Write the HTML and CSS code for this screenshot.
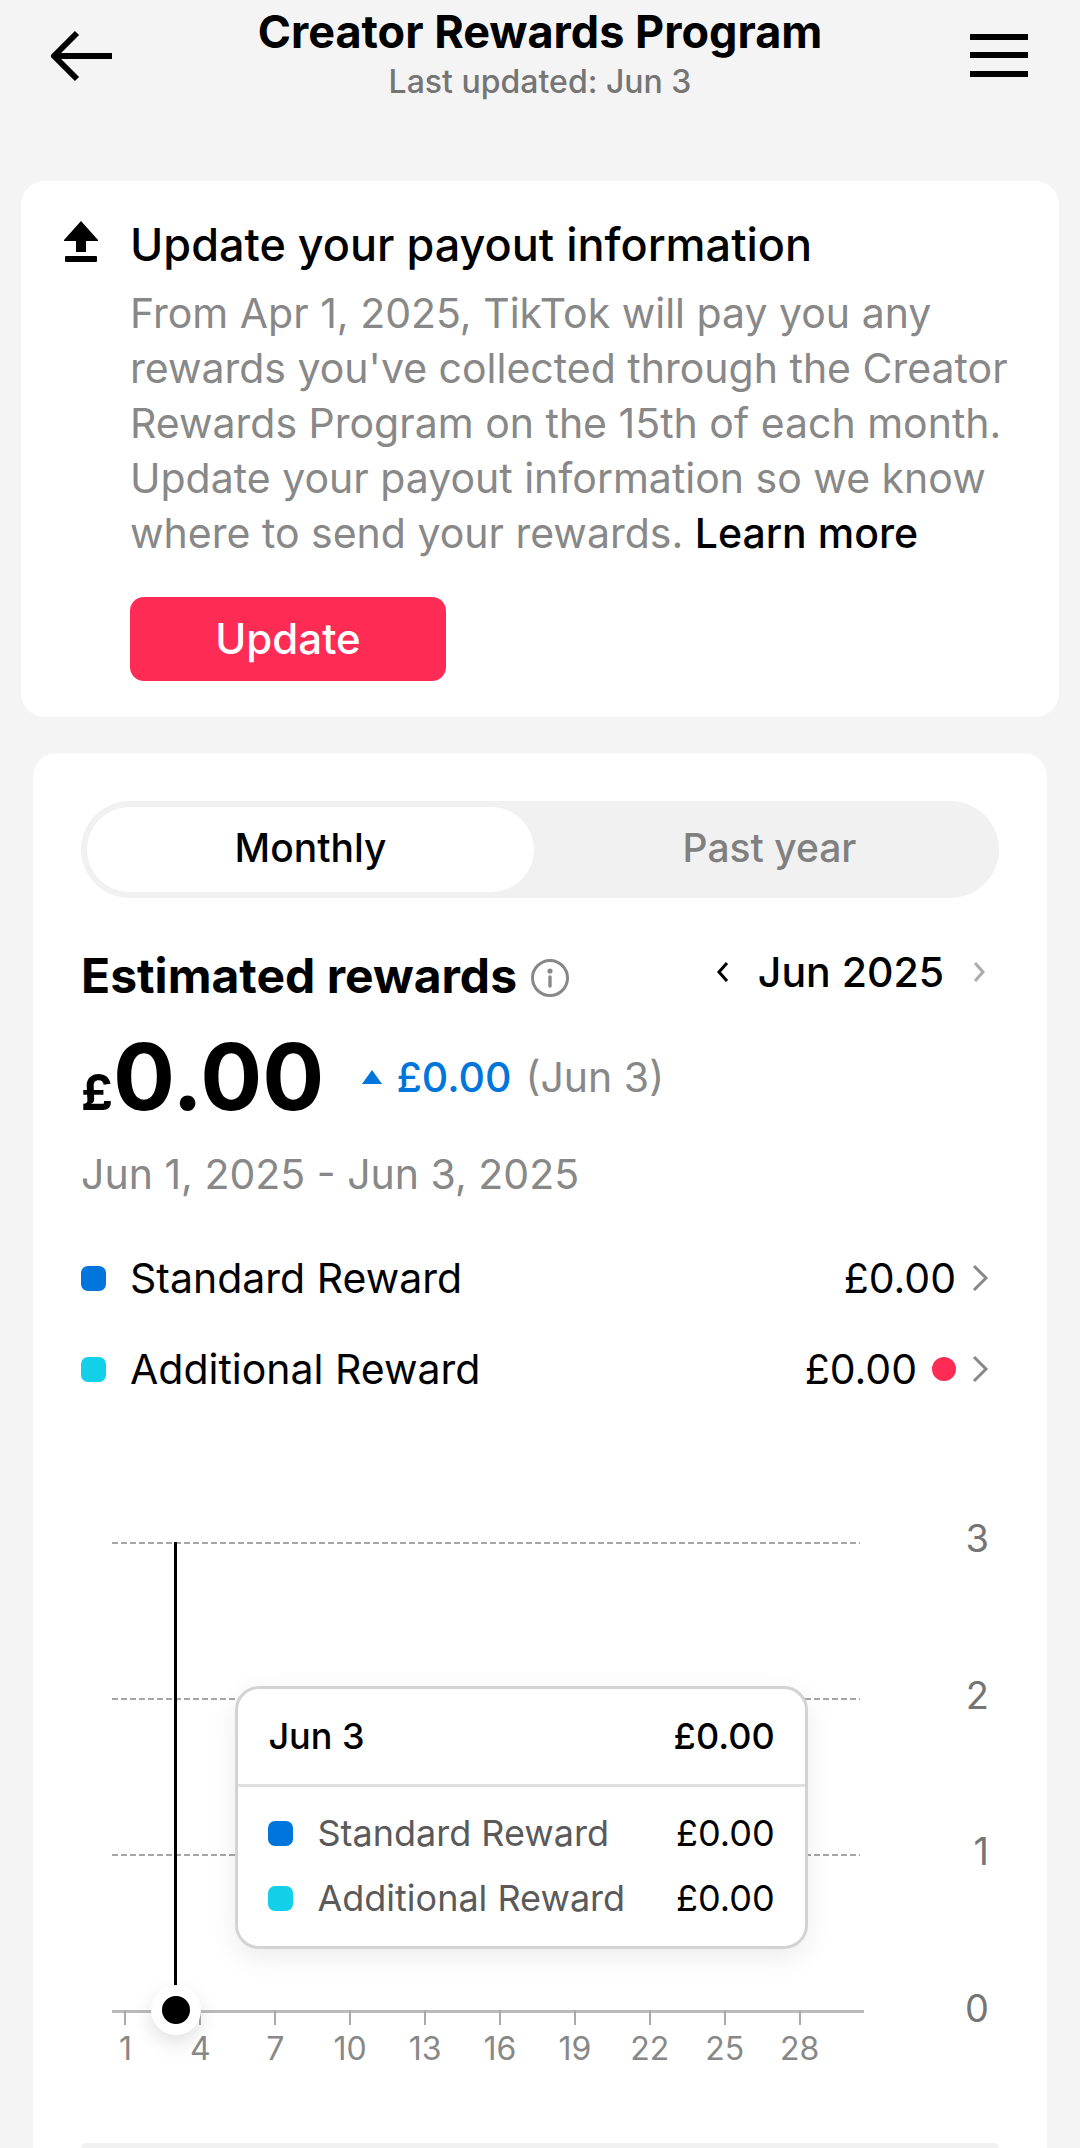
FILE: index.html
```html
<!DOCTYPE html>
<html lang="en">
<head>
    <meta charset="UTF-8">
    <meta name="viewport" content="width=device-width, initial-scale=1.0">
    <title>Creator Rewards Program</title>
    <link rel="stylesheet" href="styles.css">
</head>
<body>
    <header class="header">
        <button class="icon-btn" aria-label="Back">
            <svg width="64" height="64" viewBox="0 0 64 64" fill="none" stroke="#000" stroke-width="6" stroke-linejoin="round">
                <path d="M29 9L6 32L29 55M6 32H64"/>
            </svg>
        </button>
        <div class="header-titles">
            <h1>Creator Rewards Program</h1>
            <p>Last updated: Jun 3</p>
        </div>
        <button class="icon-btn" aria-label="Menu">
            <svg width="64" height="64" viewBox="0 0 64 64" fill="none" stroke="#000" stroke-width="6">
                <path d="M2 13H60M2 31H60M2 50H60"/>
            </svg>
        </button>
    </header>

    <!-- Payout notice -->
    <section class="notice">
        <svg class="notice-icon" width="34" height="42" viewBox="0 0 34 42">
            <path d="M17 0L34 19V20H22V31H12V20H0V19Z"/>
            <rect x="1" y="35" width="32" height="6" rx="1"/>
        </svg>
        <div class="notice-body">
            <h2>Update your payout information</h2>
            <p>From Apr 1, 2025, TikTok will pay you any rewards you've collected through the Creator Rewards Program on the 15th of each month. Update your payout information so we know where to send your rewards. <a href="#">Learn more</a></p>
            <button class="update-btn">Update</button>
        </div>
    </section>

    <!-- Rewards summary -->
    <main class="rewards">
        <div class="tabs" role="tablist">
            <button class="tab active" role="tab" aria-selected="true">Monthly</button>
            <button class="tab" role="tab" aria-selected="false">Past year</button>
        </div>

        <div class="rewards-head">
            <h2>Estimated rewards</h2>
            <button class="icon-btn info" aria-label="About estimated rewards">
                <svg width="38" height="38" viewBox="0 0 38 38">
                    <circle cx="19" cy="19" r="17.5" fill="none" stroke="#888" stroke-width="3"/>
                    <circle cx="19" cy="12" r="2.6" fill="#888"/>
                    <path d="M19 18V27" stroke="#888" stroke-width="3.4" stroke-linecap="round"/>
                </svg>
            </button>
            <div class="month">
                <button class="icon-btn" aria-label="Previous month">
                    <svg width="14" height="24" viewBox="0 0 14 24" fill="none" stroke="#000" stroke-width="3">
                        <path d="M11 3L3 12L11 21"/>
                    </svg>
                </button>
                <span>Jun 2025</span>
                <button class="icon-btn" aria-label="Next month">
                    <svg width="14" height="24" viewBox="0 0 14 24" fill="none" stroke="#aaa" stroke-width="3">
                        <path d="M3 3L11 12L3 21"/>
                    </svg>
                </button>
            </div>
        </div>

        <div class="total">
            <div class="amount"><span class="currency">£</span>0.00</div>
            <div class="change">
                <svg width="20" height="14" viewBox="0 0 20 14"><path d="M10 0L20 14H0Z" fill="#0075dc"/></svg>
                <strong>£0.00</strong>
                <span>(Jun 3)</span>
            </div>
        </div>
        <p class="range">Jun 1, 2025 - Jun 3, 2025</p>

        <div class="breakdown">
            <a class="row" href="#">
                <span class="swatch standard"></span>
                <span class="row-name">Standard Reward</span>
                <span>£0.00</span>
                <svg width="18" height="28" viewBox="0 0 18 28" fill="none" stroke="#888" stroke-width="3"><path d="M3 2L15 14L3 26"/></svg>
            </a>
            <a class="row" href="#">
                <span class="swatch additional"></span>
                <span class="row-name">Additional Reward</span>
                <span>£0.00</span>
                <span class="dot"></span>
                <svg width="18" height="28" viewBox="0 0 18 28" fill="none" stroke="#888" stroke-width="3"><path d="M3 2L15 14L3 26"/></svg>
            </a>
        </div>

        <!-- Chart -->
        <div class="chart">
            <div class="plot">
                <div class="grid-lines">
                    <i></i><i></i><i></i><i class="base"></i>
                </div>
                <div class="x-axis">
                    <span>1</span><span>4</span><span>7</span><span>10</span><span>13</span>
                    <span>16</span><span>19</span><span>22</span><span>25</span><span>28</span>
                </div>
                <div class="marker"></div>
                <div class="tooltip">
                    <div class="tooltip-head"><span>Jun 3</span><span>£0.00</span></div>
                    <div class="tooltip-body">
                        <div class="tooltip-row">
                            <span class="swatch standard"></span>
                            <span class="tooltip-name">Standard Reward</span>
                            <span>£0.00</span>
                        </div>
                        <div class="tooltip-row">
                            <span class="swatch additional"></span>
                            <span class="tooltip-name">Additional Reward</span>
                            <span>£0.00</span>
                        </div>
                    </div>
                </div>
            </div>
            <div class="y-axis">
                <span>3</span><span>2</span><span>1</span><span>0</span>
            </div>
        </div>

        <div class="panel"></div>
    </main>
</body>
</html>
```
FILE: styles.css
```css
*, *::before, *::after {
    box-sizing: border-box;
}

body {
    font-family: Inter, "Liberation Sans", sans-serif;
    font-size: 41px;
    background-color: #f4f4f4;
    color: #000;
    margin: 0;
    min-height: 100vh;
    display: flex;
    flex-direction: column;
}

h1, h2, p {
    margin: 0;
}

button {
    font-family: inherit;
    border: none;
    cursor: pointer;
}

a {
    color: #000;
    text-decoration: none;
}

svg {
    display: block;
    flex: none;
}

.icon-btn {
    background: none;
    padding: 0;
}

/* Header */
.header {
    display: flex;
    align-items: center;
    justify-content: space-between;
    padding: 7px 48px 77px;
}

.header-titles {
    text-align: center;
}

.header h1 {
    font-size: 45px;
    line-height: 50px;
    font-weight: 700;
}

.header p {
    font-size: 32px;
    line-height: 44px;
    font-weight: 500;
    color: #757575;
    margin-top: 3px;
}

/* Payout notice */
.notice {
    display: flex;
    gap: 32px;
    margin: 0 21px;
    padding: 36px 24px 36px 43px;
    background-color: #fff;
    border-radius: 24px;
}

.notice-icon {
    margin-top: 4px;
}

.notice h2 {
    font-size: 45px;
    line-height: 56px;
    font-weight: 500;
}

.notice p {
    line-height: 55px;
    color: #888;
    margin-top: 13px;
}

.notice p a {
    font-weight: 500;
}

.update-btn {
    display: block;
    width: 316px;
    height: 84px;
    margin-top: 36px;
    padding: 0 0 2px;
    font-size: 42px;
    font-weight: 500;
    color: #fff;
    background-color: #fe2c55;
    border-radius: 14px;
}

/* Rewards card */
.rewards {
    flex: 1;
    display: flex;
    flex-direction: column;
    margin: 36px 33px 0;
    padding: 48px 48px 0;
    background-color: #fff;
    border-radius: 24px 24px 0 0;
}

.tabs {
    display: flex;
    gap: 12px;
    padding: 6px;
    background-color: #f1f1f1;
    border-radius: 50px;
}

.tab {
    flex: 1;
    height: 85px;
    padding: 0 0 4px;
    font-size: 39px;
    font-weight: 500;
    color: #808080;
    background: none;
    border-radius: 43px;
}

.tab.active {
    color: #000;
    background-color: #fff;
}

.rewards-head {
    display: flex;
    align-items: flex-start;
    margin-top: 50px;
}

.rewards-head h2 {
    font-size: 48px;
    line-height: 56px;
    font-weight: 700;
}

.info {
    margin: 11px 0 0 14px;
}

.month {
    display: flex;
    align-items: center;
    gap: 28px;
    margin-left: auto;
    padding-right: 13px;
    line-height: 48px;
    font-weight: 500;
}

.total {
    display: flex;
    align-items: center;
    gap: 38px;
    margin-top: 18px;
}

.amount {
    font-size: 92px;
    line-height: 110px;
    font-weight: 700;
}

.currency {
    font-size: 50px;
    line-height: 50px;
}

.change {
    display: flex;
    align-items: center;
    gap: 14px;
    color: #888;
}

.change strong {
    font-weight: 500;
    color: #0075dc;
}

.range {
    line-height: 56px;
    color: #888;
    margin-top: 14px;
}

/* Reward rows */
.breakdown {
    display: flex;
    flex-direction: column;
    gap: 35px;
    margin-top: 48px;
}

.row {
    display: flex;
    align-items: center;
    gap: 15px;
    padding-right: 10px;
    line-height: 56px;
}

.row-name {
    flex: 1;
    margin-left: 9px;
}

.swatch {
    flex: none;
    width: 25px;
    height: 25px;
    border-radius: 7px;
}

.standard {
    background-color: #0075dc;
}

.additional {
    background-color: #12d0e8;
}

.dot {
    width: 24px;
    height: 24px;
    background-color: #fe2c55;
    border-radius: 50%;
}

/* Chart */
.chart {
    display: flex;
    margin-top: 145px;
    padding: 0 10px 0 31px;
}

.plot {
    flex: 1;
    position: relative;
}

.grid-lines {
    display: flex;
    flex-direction: column;
    justify-content: space-between;
    height: 471px;
}

.grid-lines i {
    height: 2px;
    background: repeating-linear-gradient(to right, #a6a6a6 0 6px, transparent 6px 9px);
}

.grid-lines .base {
    height: 3px;
    margin-right: -4px;
    background: #bbb;
}

.x-axis {
    display: grid;
    grid-template-columns: repeat(10, 1fr);
    margin: -3px 23px 0 -24px;
    font-size: 32px;
    line-height: 40px;
    text-align: center;
    color: #888;
}

.x-axis span::before {
    content: "";
    display: block;
    width: 2px;
    height: 15px;
    margin: 0 auto 4px;
    background-color: #aaa;
}

.y-axis {
    display: flex;
    flex-direction: column;
    justify-content: space-between;
    width: 129px;
    height: 510px;
    margin-top: -24px;
    font-size: 38px;
    line-height: 40px;
    text-align: right;
    color: #757575;
}

/* Selected day */
.marker {
    position: absolute;
    top: 0;
    left: 8.5%;
    width: 50px;
    height: 493px;
    margin-left: -25px;
    background: linear-gradient(#000, #000) center top / 3px 450px no-repeat;
}

.marker::after {
    content: "";
    position: absolute;
    bottom: 0;
    left: 0;
    width: 50px;
    height: 50px;
    border: 11px solid #fff;
    border-radius: 50%;
    background-color: #000;
    box-shadow: 0 8px 20px rgba(0, 0, 0, 0.12);
}

.tooltip {
    position: absolute;
    top: 144px;
    left: 16.5%;
    width: 76.5%;
    font-size: 36px;
    line-height: 48px;
    background-color: #fff;
    border: 3px solid #d3d3d3;
    border-radius: 24px;
    box-shadow: 0 8px 28px rgba(0, 0, 0, 0.08);
}

.tooltip-head {
    display: flex;
    justify-content: space-between;
    padding: 23px 30px 24px;
    font-weight: 500;
    border-bottom: 3px solid #e0e0e0;
}

.tooltip-body {
    display: flex;
    flex-direction: column;
    gap: 17px;
    padding: 22px 30px 24px;
}

.tooltip-row {
    display: flex;
    align-items: center;
}

.tooltip-name {
    flex: 1;
    margin-left: 24px;
    color: #5a5a5a;
}

.panel {
    flex: 1;
    margin-top: 74px;
    background-color: #f1f1f1;
    border-radius: 12px 12px 0 0;
}
```
